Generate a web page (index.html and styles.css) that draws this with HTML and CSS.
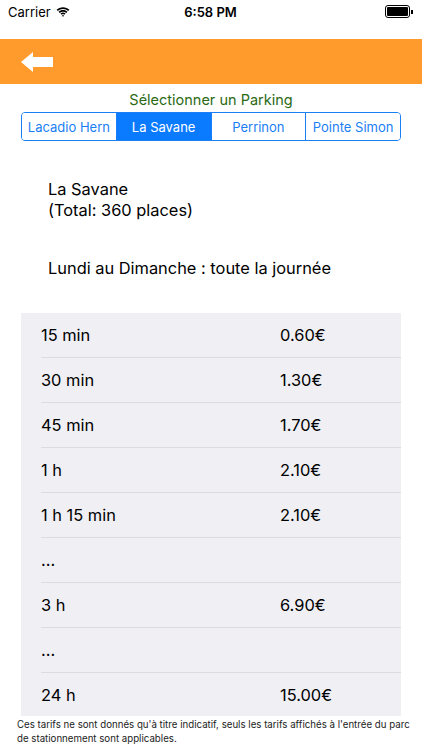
FILE: index.html
```html
<!DOCTYPE html>
<html lang="fr">

<head>
    <meta charset="UTF-8">
    <meta name="viewport" content="width=device-width, initial-scale=1.0">
    <title>Tarifs Parking</title>
    <link rel="stylesheet" href="styles.css">
</head>

<body>
    <div class="statusBar">
        <div class="carrier">
            Carrier
            <svg class="wifi" width="14" height="10" viewBox="0 0 15 11">
                <path d="M7.5 2.2c2.2 0 4.2.9 5.7 2.3l1.3-1.4C12.7 1.4 10.2.3 7.5.3S2.3 1.4.5 3.1l1.3 1.4c1.5-1.4 3.5-2.3 5.7-2.3z" fill="#000"/>
                <path d="M7.5 5.2c1.4 0 2.6.5 3.6 1.4l1.3-1.4C11.1 4 9.4 3.3 7.5 3.3S3.9 4 2.6 5.2l1.3 1.4c1-.9 2.2-1.4 3.6-1.4z" fill="#000"/>
                <path d="M7.5 8.1c.6 0 1.1.2 1.5.5l1.3-1.4c-.8-.7-1.8-1.1-2.8-1.1s-2 .4-2.8 1.1l1.3 1.4c.4-.3.9-.5 1.5-.5zM7.5 10.8l1.2-1.3c-.3-.3-.7-.4-1.2-.4s-.9.1-1.2.4z" fill="#000"/>
            </svg>
        </div>
        <div class="time">6:58 PM</div>
        <div class="battery">
            <div class="batteryBody"><div class="batteryLevel"></div></div>
            <div class="batteryTip"></div>
        </div>
    </div>

    <div class="navBar">
        <svg class="backArrow" width="32" height="20" viewBox="0 0 32 20">
            <path d="M0 10 L12 0 L12 5 L32 5 L32 15 L12 15 L12 20 Z" fill="#fff"/>
        </svg>
    </div>

    <p class="pickTitle">Sélectionner un Parking</p>
    <div class="segmented">
        <button class="segment">Lacadio Hern</button>
        <button class="segment active">La Savane</button>
        <button class="segment">Perrinon</button>
        <button class="segment">Pointe Simon</button>
    </div>

    <div class="parkInfo">
        <p class="parkName">La Savane<br>(Total: 360 places)</p>
        <p class="parkHours">Lundi au Dimanche : toute la journée</p>
    </div>

    <div class="priceTable">
        <div class="priceRow"><span class="duration">15 min</span><span class="price">0.60€</span></div>
        <div class="priceRow"><span class="duration">30 min</span><span class="price">1.30€</span></div>
        <div class="priceRow"><span class="duration">45 min</span><span class="price">1.70€</span></div>
        <div class="priceRow"><span class="duration">1 h</span><span class="price">2.10€</span></div>
        <div class="priceRow"><span class="duration">1 h 15 min</span><span class="price">2.10€</span></div>
        <div class="priceRow"><span class="duration">...</span><span class="price"></span></div>
        <div class="priceRow"><span class="duration">3 h</span><span class="price">6.90€</span></div>
        <div class="priceRow"><span class="duration">...</span><span class="price"></span></div>
        <div class="priceRow"><span class="duration">24 h</span><span class="price">15.00€</span></div>
    </div>

    <p class="disclaimer">Ces tarifs ne sont donnés qu'à titre indicatif, seuls les tarifs affichés à l'entrée du parc de stationnement sont applicables.</p>
</body>
</html>
```

FILE: styles.css
```css
body {
    margin: 0;
    width: 422px;
    height: 750px;
    overflow: hidden;
    font-family: Inter, "Liberation Sans", Arial, sans-serif;
    background-color: #fff;
    color: #000;
}

p {
    margin: 0;
}

.statusBar {
    height: 23px;
    display: flex;
    align-items: center;
    justify-content: space-between;
    padding: 0 9px 0 8px;
    font-size: 13px;
}

.carrier {
    display: flex;
    align-items: center;
    gap: 5px;
    width: 100px;
}

.time {
    font-weight: 600;
}

.battery {
    width: 100px;
    display: flex;
    justify-content: flex-end;
    align-items: center;
}

.batteryBody {
    width: 21px;
    height: 9px;
    border: 1px solid #000;
    border-radius: 3px;
    padding: 1px;
}

.batteryLevel {
    width: 100%;
    height: 100%;
    background-color: #000;
    border-radius: 1px;
}

.batteryTip {
    width: 1.5px;
    height: 4px;
    background-color: #000;
    margin-left: 1px;
}

.navBar {
    margin-top: 16px;
    height: 45px;
    background-color: #ff9a2c;
    display: flex;
    align-items: center;
    padding-left: 21px;
}

.pickTitle {
    margin-top: 6px;
    text-align: center;
    font-size: 14.5px;
    line-height: 19px;
    color: #2b6a14;
}

.segmented {
    margin: 3px 21px 0;
    height: 29px;
    display: flex;
    border: 1px solid #1a7ef5;
    border-radius: 4px;
    overflow: hidden;
    box-sizing: border-box;
}

.segment {
    flex: 1;
    border: none;
    border-left: 1px solid #1a7ef5;
    background-color: #fff;
    color: #1a7ef5;
    font-family: inherit;
    font-size: 13px;
    padding: 0;
}

.segment:first-child {
    border-left: none;
}

.segment.active {
    background-color: #0a7aff;
    color: #fff;
}

.parkInfo {
    padding: 38px 48px 0;
    font-size: 16.4px;
    line-height: 21px;
}

.parkHours {
    margin-top: 37px;
}

.priceTable {
    margin: 34px 21px 0;
    background-color: #efeff4;
    height: 403px;
    overflow: hidden;
}

.priceRow {
    margin-left: 20px;
    height: 44px;
    display: flex;
    align-items: center;
    border-bottom: 1px solid #dcdce0;
    font-size: 16.4px;
}

.duration {
    width: 239px;
}

.disclaimer {
    margin-top: 2px;
    padding-left: 17px;
    font-size: 9.7px;
    line-height: 14px;
    color: #222;
}
```
